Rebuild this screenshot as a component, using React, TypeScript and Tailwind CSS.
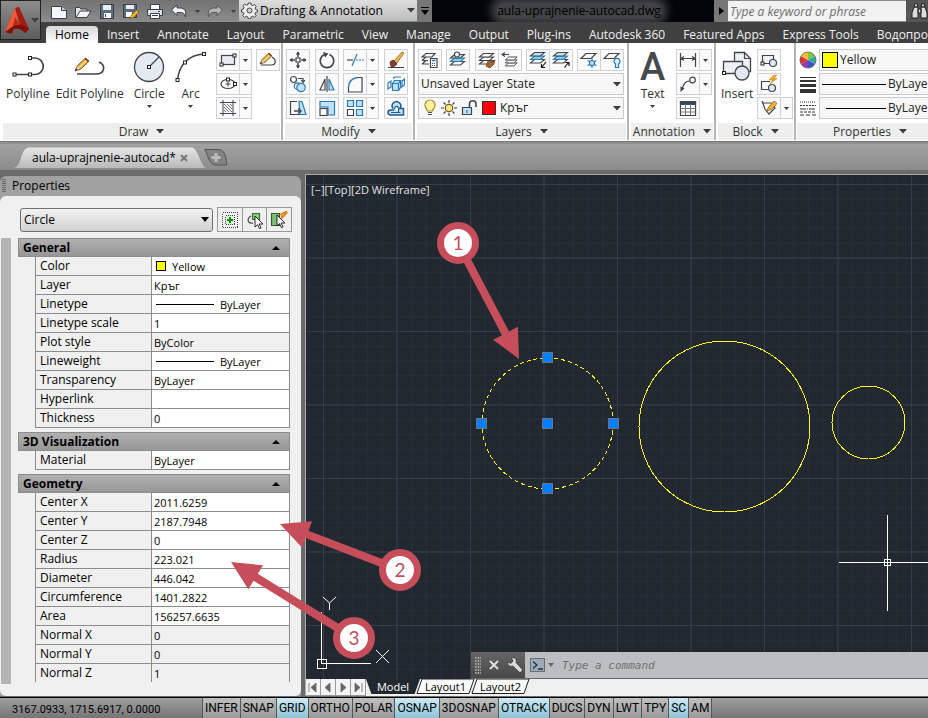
import type { ReactNode } from "react";

type IconProps = { w?: number; h?: number; children: ReactNode };

const INK = "#41464c";
const BLUE = "#2b7bb9";
const PALE = "#bfe2f7";

function Icon({ w = 18, h = 18, children }: IconProps) {
  return (
    <svg width={w} height={h} viewBox={`0 0 ${w} ${h}`} fill="none" stroke={INK} strokeWidth="1.2" aria-hidden="true" className="shrink-0">
      {children}
    </svg>
  );
}

function Caret({ big = false }: { big?: boolean }) {
  return big ? (
    <svg width="8" height="5" viewBox="0 0 8 5" aria-hidden="true" className="shrink-0"><path d="M0 0h8L4 4.6z" fill="#3c3c3c" /></svg>
  ) : (
    <svg width="5" height="3" viewBox="0 0 5 3" aria-hidden="true" className="shrink-0"><path d="M0 0h5L2.5 3z" fill="#3c3c3c" /></svg>
  );
}

function Node({ x, y }: { x: number; y: number }) {
  return <rect x={x - 1.5} y={y - 1.5} width="3" height="3" fill="#fff" stroke="#222" strokeWidth="1" />;
}

function Pencil() {
  return (
    <g stroke="none">
      <path d="M0 13L2.500 7.500 10.500 0l3.500 3.200L6 11z" fill="#e9a72d" />
      <path d="M4 8.500L11 2l1.200 1-7 6.600z" fill="#ffe28a" />
      <path d="M0 13l2.500-5.500L6 11z" fill="#e8d2b0" />
      <path d="M0 13l1-2.400 1.600 1.300z" fill="#222" />
      <path d="M9.400 1L11 0l3.200 3-1.200 1.300z" fill="#8c4a35" />
      <path d="M0 13L2.500 7.500 10.500 0l3.500 3.200L6 11z" fill="none" stroke="#5d431a" strokeWidth=".8" />
    </g>
  );
}

/* ---------- title bar ---------- */

function QuickIcon({ label, children }: { label: string; children: ReactNode }) {
  return (
    <button aria-label={label} className="flex h-[22px] w-6 items-center justify-center">
      <svg width="18" height="17" viewBox="0 0 18 17" fill="none" stroke="#3b4048" strokeWidth="1" aria-hidden="true">{children}</svg>
    </button>
  );
}

function QuickAccess() {
  return (
    <div className="flex shrink-0 items-center pl-[6px]">
      <QuickIcon label="New"><path d="M1.500 3.500h10l5 4v8h-15z" fill="#f4f7fb" /><path d="M11.500 3.500v4h5" fill="#c9d3e0" /></QuickIcon>
      <QuickIcon label="Open"><path d="M1.500 14V4.500h4l1.500 1.500h6v2" fill="#dfe5ec" /><path d="M2 14.500l4-6.500h11l-4 6.500z" fill="#f1f4f8" /></QuickIcon>
      <QuickIcon label="Save"><path d="M2.500 1.500h13v14h-13z" fill="#5b6b80" /><path d="M5 2h8v5H5z" fill="#e9eef5" stroke="none" /><path d="M6 10h7v5H6z" fill="#fff" stroke="none" /><path d="M7.500 11v3" /></QuickIcon>
      <QuickIcon label="Save As"><path d="M1.500 1.500h13v13h-13z" fill="#5b6b80" /><path d="M4 2h8v4H4z" fill="#e9eef5" stroke="none" /><path d="M4 9h6v5H4z" fill="#fff" stroke="none" /><path d="M8 16l1.500-4 5-5L17 9l-5.500 5.500z" fill="#f0b030" stroke="#7a5510" strokeWidth=".7" /></QuickIcon>
      <QuickIcon label="Plot"><path d="M4.500 6V1.500h9V6" fill="#fff" /><path d="M1.500 6.500h15v6h-15z" fill="#dde3ea" /><path d="M4.500 10.500h9v5h-9z" fill="#fff" /><path d="M6 12.500h6M12 8.500h2" /></QuickIcon>
      <QuickIcon label="Undo"><path d="M1.500 7L7 2v3h3.500c4 0 6 3 5 9-1-3.500-2.500-4.500-5-4.500H7v3z" fill="#eef3f8" /></QuickIcon>
      <button aria-label="Undo list" className="flex w-3 justify-center"><Caret /></button>
      <QuickIcon label="Redo"><path d="M16.500 7L11 2v3H7.500c-4 0-6 3-5 9 1-3.500 2.500-4.500 5-4.500H11v3z" fill="#b4b4b4" stroke="#555" /></QuickIcon>
      <button aria-label="Redo list" className="flex w-3 justify-center"><Caret /></button>
    </div>
  );
}

function TitleBar() {
  return (
    <div className="flex h-[22px] bg-gradient-to-b from-[#737373] to-[#8c8c8c]">
      <QuickAccess />
      <div className="relative flex w-[178px] shrink-0 items-center border-b border-[#888] bg-gradient-to-b from-[#dedede] to-[#bcbcbc] pl-[2px]">
        <svg width="17" height="17" viewBox="0 0 17 17" fill="none" stroke="#444" aria-hidden="true" className="shrink-0">
          <path d="M7.200 1h2.600l.4 2 1.500.6 1.700-1.100 1.900 1.900-1.200 1.700.6 1.500 1.800.4v1.900l-1.900.5-.6 1.500 1.100 1.700-1.800 1.900-1.700-1.200-1.500.6-.4 1.900H7.200l-.4-1.900-1.500-.6-1.700 1.100-1.900-1.800 1.200-1.800-.6-1.400L.5 10V7.500l1.800-.4.7-1.500-1.200-1.800 1.900-1.800 1.700 1.100L6.800 3z" fill="#ececec" />
          <circle cx="8.500" cy="8.500" r="2.500" fill="#cfcfcf" />
        </svg>
        <select aria-label="Workspace" className="w-full appearance-none truncate bg-transparent pl-[2px] text-xs text-black">
          <option>Drafting &amp; Annotation</option>
        </select>
        <span className="pointer-events-none absolute right-[2px]"><Caret big /></span>
      </div>
      <button aria-label="Customize toolbar" className="flex w-[15px] shrink-0 flex-col items-center justify-center gap-[2px] bg-[#777]">
        <span className="h-px w-2 bg-black" /><svg width="8" height="5" viewBox="0 0 8 5" aria-hidden="true"><path d="M0 0h8L4 5z" /></svg>
      </button>
      <div className="flex min-w-0 flex-1 items-center justify-center overflow-hidden bg-[#030507] pl-3">
        <span className="rounded-full bg-[#414243] text-xs whitespace-nowrap text-black shadow-[0_0_8px_6px_#414243]">aula-uprajnenie-autocad.dwg</span>
      </div>
      <button aria-label="Show search" className="flex w-[14px] shrink-0 items-center justify-center bg-[#777]">
        <svg width="5" height="8" viewBox="0 0 5 8" aria-hidden="true"><path d="M0 0l5 4-5 4z" /></svg>
      </button>
      <input aria-label="Search" placeholder="Type a keyword or phrase" className="h-[21px] w-[178px] shrink-0 border-t border-[#888] bg-[#f2f2f2] pl-[2px] text-xs italic placeholder:text-[#6d6d6d]" />
      <button aria-label="Find" className="flex w-[22px] shrink-0 items-center justify-end bg-[#555]">
        <svg width="17" height="18" viewBox="0 0 17 18" fill="#ddd" stroke="#222" aria-hidden="true">
          <path d="M3 5h4v11H1v-5zM10 5h4l2 6v5h-6zM7 7h3v4H7zM3.500 2h3v3h-3zM10.500 2h3v3h-3z" />
        </svg>
      </button>
    </div>
  );
}

const ribbonTabs = ["Home", "Insert", "Annotate", "Layout", "Parametric", "View", "Manage", "Output", "Plug-ins", "Autodesk 360", "Featured Apps", "Express Tools", "Водопровод"];

function Header() {
  return (
    <header className="flex bg-[#404040]">
      <button aria-label="Application menu" className="flex h-10 w-[41px] shrink-0 items-center gap-[2px] border border-[#222] bg-gradient-to-b from-[#8d8d8d] to-[#5d5d5d] pl-1">
        <svg width="24" height="27" viewBox="0 0 24 27" aria-hidden="true">
          <path d="M0 25L10 1l4-1-5 19z" fill="#d8331f" />
          <path d="M10 1l4-1 10 22-4 4-5-8z" fill="#a51c11" />
          <path d="M0 25l8-6c5-3 10-2 16 3l-4 4c-5-5-9-5-12-3l-1 4z" fill="#821009" />
          <path d="M10 1l3 12-5 6-8 6z" fill="#ef5a38" />
          <path d="M10 10l5 8H8z" fill="#c32716" />
        </svg>
        <Caret big />
      </button>
      <div className="flex min-w-0 flex-1 flex-col">
        <TitleBar />
        <nav className="flex h-[21px] items-end overflow-hidden pl-[5px]">
          {ribbonTabs.map((t, i) => (
            <button key={t} className={i === 0 ? "h-[17px] shrink-0 rounded-t-sm bg-gradient-to-b from-[#d8d8d8] to-white px-[9px] text-xs leading-[16px] text-black" : "h-[17px] shrink-0 px-[9px] text-xs leading-[16px] whitespace-nowrap text-[#f0f0f0]"}>
              {t}
            </button>
          ))}
        </nav>
      </div>
    </header>
  );
}

/* ---------- ribbon ---------- */

function Tool({ label, drop = false, children }: { label: string; drop?: boolean; children: ReactNode }) {
  return (
    <div className="flex shrink-0">
      <button aria-label={label} className="flex h-[22px] w-6 items-center justify-center border border-[#cfd1d4] bg-[#fafafa]"><Icon>{children}</Icon></button>
      {drop && <button aria-label={`${label} options`} className="flex h-[22px] w-3 items-center justify-center border border-l-0 border-[#cfd1d4] bg-[#fafafa]"><Caret /></button>}
    </div>
  );
}

function BigTool({ label, drop = false, children }: { label: string; drop?: boolean; children: ReactNode }) {
  return (
    <button className="flex h-[70px] shrink-0 flex-col items-center text-xs text-[#2c2f33]">
      <span className="flex h-[36px] items-center">{children}</span>
      <span className="leading-[18px] whitespace-nowrap">{label}</span>
      {drop && <span className="pt-[2px]"><Caret /></span>}
    </button>
  );
}

function Panel({ title, className, children }: { title: string; className: string; children: ReactNode }) {
  return (
    <section className={`flex flex-col border-r-2 border-[#b4b4b4] bg-white ${className}`}>
      <div className="h-20 pt-[6px]">{children}</div>
      <button className="mx-px flex h-[17px] items-center justify-center gap-2 bg-[#eeeeee] text-xs whitespace-nowrap text-[#333]">{title}<Caret big /></button>
    </section>
  );
}

function DrawPanel() {
  return (
    <Panel title="Draw" className="w-[283px] shrink-0 pl-[2px]">
      <div className="flex justify-between pr-px pl-1">
        <div className="flex gap-[6px]">
          <BigTool label="Polyline"><Icon w={32} h={26}><path d="M2.500 20.500h17M20 4h3a8 8 0 0 1 0 16.500h-3" strokeWidth="1.600" /><Node x={2.500} y={20.500} /><Node x={18} y={20.500} /><Node x={18} y={4} /></Icon></BigTool>
          <BigTool label="Edit Polyline"><Icon w={32} h={20}><path d="M3 17h19c9 0 10-9 3-12" strokeWidth="1.600" /><g transform="translate(1 1)"><Pencil /></g></Icon></BigTool>
        </div>
        <BigTool label="Circle" drop><Icon w={32} h={32}><circle cx="16" cy="16" r="14.500" fill="#e4eaf2" strokeWidth="1.300" /><path d="M16 16L26 6" /><Node x={16} y={16} /></Icon></BigTool>
        <BigTool label="Arc" drop><Icon w={32} h={32}><path d="M2.500 29C4 14 13 4 29 3" strokeWidth="1.600" /><Node x={2.500} y={29} /><Node x={10} y={11.500} /><Node x={29} y={3} /></Icon></BigTool>
        <div className="flex gap-1">
          <div className="flex flex-col gap-[2px]">
            <Tool label="Rectangle" drop><rect x="2.500" y="4.500" width="13" height="9" fill="#e8ecf2" /><Node x={2.500} y={13.500} /><Node x={15.500} y={4.500} /></Tool>
            <Tool label="Ellipse" drop><ellipse cx="9" cy="9" rx="7" ry="4.500" /><path d="M6.500 9h5M9 6.500v5" strokeWidth="1" /><Node x={9} y={4.500} /><Node x={16} y={9} /></Tool>
            <Tool label="Hatch" drop><path d="M4 1v16M14 1v16M1 3.500h16M1 14.500h16" strokeWidth="1" /><path d="M5 5l8 8M5 8l5 5M8 5l5 5M5 11l2 2M11 5l2 2" strokeWidth=".8" /></Tool>
          </div>
          <Tool label="Edit Spline"><path d="M2 14h10c6 0 5-6 1-8" /><g transform="translate(1 2) scale(.85)"><Pencil /></g></Tool>
        </div>
      </div>
    </Panel>
  );
}

function ModifyPanel() {
  return (
    <Panel title="Modify" className="w-[132px] shrink-0 pl-px">
      <div className="grid grid-cols-[24px_24px_36px_24px] justify-between gap-y-[2px] pr-[5px] pl-[2px]">
        <Tool label="Move"><path d="M9 1v5M9 12v5M1 9h5M12 9h5" strokeWidth="1.500" /><path d="M6.800 3.500L9 .5l2.200 3zM6.800 14.500L9 17.500l2.200-3zM3.500 6.800L.5 9l3 2.200zM14.500 6.800l3 2.200-3 2.200z" fill={INK} stroke="none" /><rect x="7" y="7" width="4" height="4" fill="#fff" /></Tool>
        <Tool label="Rotate"><path d="M6.500 3.500a6.800 6.800 0 1 0 5 0" strokeWidth="1.700" /><path d="M5 1l5.500 1.500-3.500 4z" fill={INK} stroke="none" /></Tool>
        <Tool label="Trim" drop><path d="M10 9h8" strokeDasharray="2 1" stroke={BLUE} /><path d="M1 9h6" /><path d="M11 3L6 15" stroke={BLUE} /></Tool>
        <Tool label="Erase"><path d="M1 16.500h16" strokeWidth="1" /><path d="M7 10L15 1l2 1-7 10z" fill="#edb640" stroke="#7c5723" strokeWidth=".7" /><path d="M3 11l3-2 4 4-3 2.500H4z" fill="#8b3d2e" stroke="#4d241c" strokeWidth=".8" /></Tool>
        <Tool label="Copy"><circle cx="4.500" cy="4.500" r="3" /><path d="M9 3.500h5v3M12.300 5l1.800 2.500L16 5" /><circle cx="8.500" cy="11" r="3.200" stroke={BLUE} /><circle cx="12" cy="12.500" r="4.200" stroke={BLUE} fill={PALE} /></Tool>
        <Tool label="Mirror"><path d="M7 4v11H2zM9 1v16" /><path d="M11 4v11h5z" fill={PALE} stroke={BLUE} /></Tool>
        <Tool label="Fillet" drop><path d="M2.500 12v5h13.500V2.500h-4" /><path d="M2.500 12C3 6 7 3 12 2.500" stroke={BLUE} strokeWidth="1.500" /></Tool>
        <Tool label="Explode"><path d="M5.500 8.500h6v7h-6zM5.500 8.500l2-3h6l-2 3M11.500 15.500l2-3v-7" fill={PALE} stroke={BLUE} /><path d="M1 8l3-2v6l-3 2zM17.500 4L15 6v6l2.500-2zM6 3.500l2-1.500h6" stroke={BLUE} /></Tool>
        <Tool label="Stretch"><path d="M8 2.500H1.500v13H12" /><path d="M10 2.500h3l4 13h-6z" fill={PALE} stroke={BLUE} /><path d="M5 12h6M9 9.500l3 2.500-3 2.500" strokeWidth="1.400" /></Tool>
        <Tool label="Scale"><path d="M2 2.500h14.500V16H10V8H2z" fill={PALE} stroke={BLUE} /><rect x="2" y="9.500" width="7" height="7" fill="#fff" /></Tool>
        <Tool label="Array" drop><g fill={PALE} stroke={BLUE}><path d="M1.500 1.500h6v6h-6zM10.500 1.500h6v6h-6zM10.500 10.500h6v6h-6z" /></g><path d="M1.500 10.500h6v6h-6z" fill="#fff" /></Tool>
        <Tool label="Offset"><path d="M6 9.500a4.300 4.300 0 1 1 7 0h3.500v6.500h-13a2.500 2.500 0 0 1 0-5h3.500" fill={PALE} stroke="#245a8d" strokeWidth="1.500" /><path d="M4 13.500h9.500M8 10.500a2 2 0 1 1 3.500-.5v3" fill="#fff" stroke="#245a8d" /></Tool>
      </div>
    </Panel>
  );
}

function Sheets({ blue = false }: { blue?: boolean }) {
  return (
    <g strokeWidth="1.100">
      <path d="M1.500 14l4-3.500h10l-4 3.500z" fill="#fff" />
      <path d="M1.500 10.500L5.500 7h10l-4 3.500z" fill={blue ? "#8ecbee" : "#fff"} stroke={blue ? BLUE : INK} />
      <path d="M1.500 7L5.500 3.500h10L11.500 7z" fill={blue ? PALE : "#fff"} />
    </g>
  );
}

function LayersPanel() {
  return (
    <Panel title="Layers" className="w-[214px] shrink-0 pl-px">
      <div className="flex flex-col gap-[2px] pr-[3px] pl-[2px]">
        <div className="flex justify-between">
          <Tool label="Layer Properties"><path d="M1 13l4-3.500M1 13h7M1 9.500L5 6h6M1 9.500h6M1 6l4-3.500h9L11 6z" /><path d="M9.500 7.500h6.500v9H9.500z" fill="#fff" /><path d="M11 9.500h3.500" stroke={BLUE} strokeWidth="1.600" /><path d="M11 12.500h4M11 14.500h4" strokeDasharray="1 1" /></Tool>
          <Tool label="Make Current"><Sheets blue /><circle cx="8" cy="3.500" r="2.500" fill="#fff" /></Tool>
          <div className="flex -space-x-px">
            <Tool label="Match Layer"><g transform="translate(0 -1)"><Sheets /></g><path d="M10 10l4 1 3-2-1 4-4 4-4-2z" fill="#a9642b" stroke="#693912" strokeWidth=".7" /></Tool>
            <Tool label="Layer Previous"><g transform="translate(3 3) scale(.85)"><Sheets /></g><path d="M8 3.500H2M4 1.500l-3 2 3 2" /></Tool>
          </div>
          <div className="flex -space-x-px">
            <Tool label="Isolate"><g transform="translate(0 -2)"><Sheets blue /></g><path d="M17 11l-4 5M12.500 13v3.500H16" stroke="#111" /></Tool>
            <Tool label="Unisolate"><g transform="translate(0 -2)"><Sheets blue /></g><path d="M12.500 16.500l4-5M13.500 11.500h3.500V15" stroke="#111" /></Tool>
          </div>
          <div className="flex -space-x-px">
            <Tool label="Freeze"><path d="M1 7.500l5-5h10l-5 5z" /><path d="M12 7v10M7.500 9.500l9 5M16.500 9.500l-9 5" stroke={BLUE} /><circle cx="12" cy="12" r="2.500" stroke={BLUE} fill={PALE} /></Tool>
            <Tool label="Layer Off"><path d="M1 7.500l5-5h10l-5 5z" /><path d="M12.500 13a3 3 0 1 1 3 0v3.500h-3z" stroke={BLUE} fill="#dff1fc" /></Tool>
          </div>
        </div>
        <div className="relative flex h-[22px] items-center border border-[#c6c9cd] bg-[#f7f7f7]">
          <select aria-label="Layer state" className="w-full appearance-none bg-transparent pl-[2px] text-xs text-[#222]"><option>Unsaved Layer State</option></select>
          <span className="pointer-events-none absolute right-[2px]"><Caret big /></span>
        </div>
        <div className="relative flex h-[22px] items-center gap-1 border border-[#c6c9cd] bg-[#f7f7f7] pl-1">
          <Icon w={14}><path d="M4.500 12C4 10 2 9 2 6a5 5 0 0 1 10 0c0 3-2 4-2.500 6z" fill="#fff3a6" stroke="#b08b24" /><path d="M5 13.500h4M5 15.500h4" stroke="#555" /></Icon>
          <Icon w={16}><circle cx="8" cy="9" r="3.700" fill="#ffe985" stroke="#6d6124" /><path d="M8 1v3M8 14v3M0 9h3M13 9h3M2.500 3.500l2 2M11.500 12.500l2 2M13.500 3.500l-2 2M4.500 12.500l-2 2" /></Icon>
          <Icon w={17}><path d="M1.500 8.500h9v7h-9z" fill={PALE} /><path d="M8.500 8V5a3 3 0 0 1 6.500 0v3" strokeWidth="1.600" /><path d="M6 11v3" stroke={BLUE} /></Icon>
          <span className="h-[14px] w-[14px] shrink-0 border border-[#333] bg-[#ff0000]" />
          <select aria-label="Current layer" className="w-full appearance-none bg-transparent text-xs text-[#222]"><option>Кръг</option></select>
          <span className="pointer-events-none absolute right-[2px]"><Caret big /></span>
        </div>
      </div>
    </Panel>
  );
}

function AnnotationPanel() {
  return (
    <Panel title="Annotation" className="w-[87px] shrink-0 pl-px">
      <div className="flex justify-between pr-[2px] pl-[10px]">
        <BigTool label="Text" drop><span className="font-['Roboto',sans-serif] text-[38px] leading-[36px] font-medium text-[#45494e]">A</span></BigTool>
        <div className="flex flex-col gap-[2px]">
          <Tool label="Dimension" drop><path d="M1.500 2v14M16.500 2v14M3 7.500h12M5 5.500l-3 2 3 2M13 5.500l3 2-3 2" /></Tool>
          <Tool label="Leader" drop><circle cx="13.500" cy="5" r="2.800" /><path d="M10.500 6C6 6 5 9 3 14" /><path d="M1.500 17V11.500l4 2z" fill={INK} stroke="none" /></Tool>
          <Tool label="Table"><path d="M1.500 2.500h15v14h-15z" fill="#fff" /><path d="M1.500 2.500h15v3h-15z" fill="#3c4a5c" /><path d="M1.500 9.500h15M1.500 13h15M6.500 5v11M11.500 5v11" strokeWidth="1" stroke="#6c7886" /></Tool>
        </div>
      </div>
    </Panel>
  );
}

function BlockPanel() {
  return (
    <Panel title="Block" className="w-[80px] shrink-0 pl-px">
      <div className="flex justify-between pr-px pl-1">
        <BigTool label="Insert"><Icon w={30} h={32}><path d="M12.500 1.500h10l6 6v13h-16z" fill="#eef2f7" strokeWidth="1.300" /><path d="M22.500 1.500v6h6" /><path d="M1.500 10.500h19v12h-19z" fill="#eef2f7" strokeWidth="1.300" /><circle cx="20" cy="22" r="7" fill="#e1e8f1" strokeWidth="1.300" /><Node x={2} y={22} /></Icon></BigTool>
        <div className="flex flex-col gap-[2px]">
          <Tool label="Create block"><path d="M2.500 4.500h11v8h-11z" fill="#eef1f5" /><circle cx="13" cy="12" r="3.500" fill="#e1e8f1" /><Node x={2.500} y={12.500} /></Tool>
          <Tool label="Edit block"><path d="M10 6.500H1.500v8H10" /><circle cx="12" cy="13" r="3.500" fill="#e1e8f1" /><path d="M14 0l-5 5h4l-3 4 7-5.500h-3.500L17 0z" fill="#f4b02c" stroke="#c17c12" strokeWidth=".6" /></Tool>
          <Tool label="Edit attributes" drop><path d="M2 2l3 8 4 5 6-6-4-5H2" /><path d="M7 12l1.500-4 5.500-6 3 2.500-5.500 6z" fill="#efb033" stroke="#7d5319" strokeWidth=".7" /></Tool>
        </div>
      </div>
    </Panel>
  );
}

function PropertiesRibbonPanel() {
  return (
    <Panel title="Properties" className="min-w-[150px] flex-1">
      <div className="flex flex-col gap-[2px] pl-[3px]">
        <div className="flex items-center gap-[2px]">
          <Icon><g stroke="none"><path d="M9 9V1a8 8 0 0 1 7 4z" fill="#7ac943" /><path d="M9 9l7-4a8 8 0 0 1 0 8z" fill="#36a9a2" /><path d="M9 9l7 4a8 8 0 0 1-7 4z" fill="#3857c4" /><path d="M9 9v8a8 8 0 0 1-7-4z" fill="#9a36b8" /><path d="M9 9l-7 4a8 8 0 0 1 0-8z" fill="#e0342b" /><path d="M9 9L2 5a8 8 0 0 1 7-4z" fill="#f3bd33" /></g><circle cx="9" cy="9" r="8" stroke="#666" strokeWidth=".8" /></Icon>
          <div className="flex h-[22px] flex-1 items-center gap-[2px] border border-[#c6c9cd] bg-[#f7f7f7] pl-[2px]">
            <span className="h-4 w-4 shrink-0 border border-black bg-[#ffff00]" />
            <select aria-label="Object color" className="w-full appearance-none bg-transparent text-xs text-[#222]"><option>Yellow</option></select>
          </div>
        </div>
        <div className="flex items-center gap-[2px]">
          <Icon><path d="M1 2.500h16" stroke="#333" strokeWidth="1" /><path d="M1 6h16" stroke="#333" strokeWidth="2" /><path d="M1 10.500h16" stroke="#333" strokeWidth="3" /><path d="M1 16h16" stroke="#333" strokeWidth="4" /></Icon>
          <div className="flex h-[22px] flex-1 items-center gap-[2px] border border-[#c6c9cd] bg-[#f7f7f7] pl-[2px]">
            <span className="h-px w-16 shrink-0 bg-black" />
            <select aria-label="Lineweight" className="w-full appearance-none bg-transparent text-xs text-[#222]"><option>ByLayer</option></select>
          </div>
        </div>
        <div className="flex items-center gap-[2px]">
          <Icon><g stroke="#333"><path d="M1 3h16" strokeDasharray="1 1" /><path d="M1 6.500h16" strokeDasharray="2 1" /><path d="M1 10h16" strokeDasharray="6 1 1 1" /><path d="M1 13h16" strokeDasharray="3 1" /><path d="M1 16h16" strokeDasharray="4 2" /></g></Icon>
          <div className="flex h-[22px] flex-1 items-center gap-[2px] border border-[#c6c9cd] bg-[#f7f7f7] pl-[6px]">
            <span className="h-px w-[60px] shrink-0 bg-black" />
            <select aria-label="Linetype" className="w-full appearance-none bg-transparent text-xs text-[#222]"><option>ByLayer</option></select>
          </div>
        </div>
      </div>
    </Panel>
  );
}

/* ---------- document tabs ---------- */

function FileTabs() {
  return (
    <div className="flex h-7 items-end border-t-2 border-[#8f8f8f] bg-gradient-to-b from-[#a2a2a2] to-[#8b8b8b] pb-[2px] pl-[14px]">
      <div className="relative flex h-[21px] w-[193px] items-center pl-[18px]">
        <svg className="absolute inset-0" width="193" height="21" viewBox="0 0 193 21" aria-hidden="true">
          <defs><linearGradient id="tab" x1="0" y1="0" x2="0" y2="1"><stop offset="0" stopColor="#e6e6e6" /><stop offset="1" stopColor="#b9b9b9" /></linearGradient></defs>
          <path d="M0 21C8 20 6 1 15 .5h162c8 0 9 20 16 20.500z" fill="url(#tab)" />
        </svg>
        <button className="relative text-xs text-black">aula-uprajnenie-autocad*</button>
        <button aria-label="Close drawing" className="relative ml-1"><svg width="8" height="8" viewBox="0 0 8 8" stroke="#777" strokeWidth="2" aria-hidden="true"><path d="M1 1l6 6M7 1L1 7" /></svg></button>
      </div>
      <button aria-label="New drawing" className="-ml-[3px]">
        <svg width="24" height="19" viewBox="0 0 24 19" aria-hidden="true"><path d="M1 .5h13c6 0 8 5 8.500 15.500H12C5 16 4 6 1 .5z" fill="#828282" stroke="#555" /><path d="M12 4v9M7.500 8.500h9" stroke="#bbb" strokeWidth="3" /></svg>
      </button>
    </div>
  );
}

/* ---------- properties palette ---------- */

type Row = { name: string; value: string; kind?: "swatch" | "line" | "locked" };

const general: Row[] = [
  { name: "Color", value: "Yellow", kind: "swatch" },
  { name: "Layer", value: "Кръг" },
  { name: "Linetype", value: "ByLayer", kind: "line" },
  { name: "Linetype scale", value: "1" },
  { name: "Plot style", value: "ByColor", kind: "locked" },
  { name: "Lineweight", value: "ByLayer", kind: "line" },
  { name: "Transparency", value: "ByLayer" },
  { name: "Hyperlink", value: "" },
  { name: "Thickness", value: "0" },
];
const visualization: Row[] = [{ name: "Material", value: "ByLayer" }];
const geometry: Row[] = [
  { name: "Center X", value: "2011.6259" },
  { name: "Center Y", value: "2187.7948" },
  { name: "Center Z", value: "0" },
  { name: "Radius", value: "223.021" },
  { name: "Diameter", value: "446.042" },
  { name: "Circumference", value: "1401.2822" },
  { name: "Area", value: "156257.6635" },
  { name: "Normal X", value: "0", kind: "locked" },
  { name: "Normal Y", value: "0", kind: "locked" },
  { name: "Normal Z", value: "1", kind: "locked" },
];

function PropertyGroup({ title, rows }: { title: string; rows: Row[] }) {
  return (
    <section className="mb-1">
      <button className="flex h-[19px] w-full items-center justify-between border border-[#8c8c8c] bg-gradient-to-b from-[#b0b0b0] to-[#979797] pr-[9px] pl-1 text-xs font-bold text-black">
        {title}
        <svg width="8" height="4" viewBox="0 0 8 4" aria-hidden="true"><path d="M0 4h8L4 0z" /></svg>
      </button>
      <table className="ml-[17px] w-[255px] table-fixed border-separate border-spacing-0 border-l border-[#8c8c8c] text-xs text-black">
        <tbody>
          {rows.map((r) => (
            <tr key={r.name} className="h-[19px]">
              <th scope="row" className="w-[116px] border-r border-b border-[#8c8c8c] p-0 pl-1 text-left leading-[18px] font-normal"><label htmlFor={`prop-${r.name}`}>{r.name}</label></th>
              <td className={r.kind === "locked" ? "border-r border-b border-[#8c8c8c] p-0" : "border-r border-b border-[#8c8c8c] bg-white p-0"}>
                <div className="flex h-[18px] items-center pl-[2px]">
                  {r.kind === "swatch" && <span className="mr-[6px] ml-[2px] h-[10px] w-[10px] shrink-0 border border-black bg-[#ffff00]" />}
                  {r.kind === "line" && <span className="mr-[6px] ml-[2px] h-px w-[58px] shrink-0 bg-black" />}
                  <input id={`prop-${r.name}`} defaultValue={r.value} readOnly={r.kind === "locked"} className="h-[18px] w-full min-w-0 bg-transparent text-[11px]" />
                </div>
              </td>
            </tr>
          ))}
        </tbody>
      </table>
    </section>
  );
}

function Palette() {
  return (
    <aside className="mt-[6px] flex w-[301px] shrink-0 flex-col rounded-t-md bg-[#a1a1a1]">
      <div className="flex h-5 items-center gap-[6px] pl-[2px] text-xs text-black">
        <svg width="4" height="14" viewBox="0 0 4 14" aria-hidden="true"><path d="M1 0v14M3 0v14" stroke="#333" strokeDasharray="1 1" /></svg>
        <h2>Properties</h2>
      </div>
      <div className="flex flex-1 flex-col rounded-md bg-[#f0f0f0] pt-[11px] pb-3">
        <div className="flex items-center gap-1 pl-5">
          <div className="relative flex h-6 w-[193px] items-center rounded-[3px] border border-[#707070] bg-gradient-to-b from-[#f2f2f2] to-[#d2d2d2]">
            <select aria-label="Selected object" className="w-full appearance-none bg-transparent pl-[3px] text-xs text-black"><option>Circle</option></select>
            <svg className="pointer-events-none absolute right-[3px]" width="8" height="5" viewBox="0 0 8 5" aria-hidden="true"><path d="M0 0h8L4 5z" /></svg>
          </div>
          <div className="flex h-[25px] divide-x divide-[#999] border border-[#999]">
            <button aria-label="Toggle PICKADD" className="flex w-[25px] items-center justify-center"><Icon><g strokeDasharray="1 1" strokeWidth="1" shapeRendering="crispEdges"><path d="M1.500 1.500h15v15h-15z" /><path d="M4.500 4.500h9v9h-9z" fill="#d9f5d3" /></g><path d="M9 6v6M6 9h6" stroke="#118a1a" strokeWidth="2" /></Icon></button>
            <button aria-label="Select objects" className="flex w-6 items-center justify-center"><Icon><path d="M6.500 2.500h7v6h-7z" fill="#8bd07c" stroke="#3c6b35" /><path d="M5 5C0 8 2 13 7 12" /><path d="M9 5v11l2.500-2.300 2 4 1.600-.8-2-3.900H17z" fill="#fff" stroke="#111" strokeWidth=".9" /></Icon></button>
            <button aria-label="Quick select" className="flex w-6 items-center justify-center"><Icon><path d="M1.500 2.500h8v12h-8z" fill="#7ebd73" stroke="#345f2d" /><path d="M12 7l5-5h-3l3-2-6 3z" fill="#f7b02c" stroke="#d47c13" /><path d="M7 4v11l2.500-2.300 2 4 1.600-.8-2-3.900H15z" fill="#fff" stroke="#111" strokeWidth=".9" /></Icon></button>
          </div>
        </div>
        <div className="mt-[6px] flex flex-1 pl-px">
          <div className="w-[10px] bg-[#b4b4b4]" />
          <div className="ml-[7px] h-[444px] w-[272px] overflow-hidden">
            <PropertyGroup title="General" rows={general} />
            <PropertyGroup title="3D Visualization" rows={visualization} />
            <PropertyGroup title="Geometry" rows={geometry} />
          </div>
        </div>
      </div>
    </aside>
  );
}

/* ---------- drawing area ---------- */

const grips = [[241, 182], [175, 248], [241, 248], [307, 248], [241, 313]];

function Drawing() {
  return (
    <div className="relative min-h-[503px] flex-1 overflow-hidden bg-[#212830]">
      <svg className="absolute inset-0 h-full w-full" aria-label="Model space" shapeRendering="crispEdges">
        <defs>
          <pattern id="minor" x="17" y="9" width="14.700" height="14.700" patternUnits="userSpaceOnUse"><path d="M.5 0v15M0 .5h15" stroke="#262e37" /></pattern>
          <pattern id="major" x="17" y="9" width="73.500" height="73.500" patternUnits="userSpaceOnUse"><path d="M.5 0v74M0 .5h74" stroke="#353e48" /></pattern>
        </defs>
        <rect width="100%" height="100%" fill="url(#minor)" />
        <rect width="100%" height="100%" fill="url(#major)" />
        <g fill="none" stroke="#ffff1e">
          <circle cx="241.500" cy="248.500" r="65.500" strokeDasharray="4 3" />
          <circle cx="418.500" cy="251.500" r="85.500" />
          <circle cx="562.500" cy="247.500" r="36.500" />
        </g>
        {grips.map(([x, y]) => <rect key={`${x}-${y}`} x={x - 4.5} y={y - 4.5} width="10" height="10" fill="#007fff" stroke="#6b7480" />)}
        <path d="M533 387.500h46M585 387.500h60M581.500 340v44M581.500 391v45" stroke="#fff" />
        <path d="M578.500 384.500h6v6h-6zM581.500 384v7M578 387.500h7" fill="none" stroke="#fff" />
      </svg>
      <span className="absolute top-[7px] left-[5px] text-[11px] whitespace-nowrap text-[#e4e4e4]">[−][Top][2D Wireframe]</span>
      <svg className="absolute bottom-[10px] left-[10px]" width="76" height="76" viewBox="0 0 76 76" fill="none" stroke="#fff" aria-hidden="true">
        <path d="M5.500 19v47M11 70.500h44M1.500 66.500h9v9h-9zM5.500 66v5M5 70.500h5" shapeRendering="crispEdges" />
        <path d="M7 4l6.500 6L20 4M13.500 10v7M60 57l13 13M73 57L60 70" />
      </svg>
      <div className="absolute right-0 bottom-0 left-[165px] flex h-[27px] items-center border-b border-[#666] bg-[#bcbec0]">
        <div className="flex h-full w-[54px] shrink-0 items-center gap-2 bg-gradient-to-b from-[#666] to-[#484848] pl-1">
          <svg width="6" height="17" viewBox="0 0 6 17" aria-hidden="true"><path d="M1 0v17M3.500 0v17M6 0v17" stroke="#aaa" strokeWidth="1.500" strokeDasharray="2 1" /></svg>
          <button aria-label="Close command line"><svg width="10" height="10" viewBox="0 0 10 10" stroke="#ddd" strokeWidth="2" aria-hidden="true"><path d="M1 1l8 8M9 1L1 9" /></svg></button>
          <button aria-label="Customize"><svg width="16" height="16" viewBox="0 0 16 16" aria-hidden="true"><path d="M1 5l3 1.500L6 4 4.500 1C8 0 10 2 9 5.500l6 6.500c1 2-1 4-3 3L6 9C3 10 0 8 1 5z" fill="#d8d8d8" stroke="#222" strokeWidth=".6" /></svg></button>
        </div>
        <svg className="ml-[5px] shrink-0" width="24" height="14" viewBox="0 0 24 14" aria-hidden="true"><rect x=".5" y=".5" width="14" height="13" fill="#9fa9b8" stroke="#636d7c" /><path d="M3 3.500L7 7l-4 3.500M8 11h5" stroke="#26303e" fill="none" strokeWidth="1.300" /><path d="M18 5h6l-3 4z" fill="#666" /></svg>
        <input aria-label="Command" placeholder="Type a command" className="ml-2 h-full min-w-0 flex-1 bg-transparent font-['DejaVu_Sans_Mono',monospace] text-[11px] italic placeholder:text-[#707274]" />
      </div>
    </div>
  );
}

const layoutArrows = [
  { label: "First layout", d: "M3 3v9M10 3v9L5 7.500z" },
  { label: "Previous layout", d: "M9 3v9L4 7.500z" },
  { label: "Next layout", d: "M5 3v9l5-4.500z" },
  { label: "Last layout", d: "M4 3v9l5-4.500zM11 3v9" },
];

function LayoutTabs() {
  return (
    <div className="flex h-[17px] bg-[#f0f0f0] text-[11px] text-black">
      <div className="flex">
        {layoutArrows.map(({ label, d }) => (
          <button key={label} aria-label={label} className="w-[15px] border border-t-0 border-l-0 border-[#999] bg-[#f4f4f4]">
            <svg width="14" height="15" viewBox="0 0 14 15" fill="#666" stroke="#666" strokeWidth=".8" aria-hidden="true"><path d={d} /></svg>
          </button>
        ))}
      </div>
      <div className="flex -space-x-1">
        <button className="h-[15px] w-[54px] bg-[#212830] text-center leading-[15px] text-white [clip-path:polygon(0_0,100%_0,90%_100%,10%_100%)]">Model</button>
        {["Layout1", "Layout2"].map((t) => (
          <button key={t} className="relative h-[15px] w-[59px] text-center leading-[15px]">
            <svg className="absolute inset-0" width="59" height="15" viewBox="0 0 59 15" aria-hidden="true"><path d="M1 14.500L6 0h52l-5 14.500z" fill="#fafafa" stroke="#222" /></svg>
            <span className="relative">{t}</span>
          </button>
        ))}
      </div>
    </div>
  );
}

const callouts = [
  { n: "1", cx: 458, cy: 73, tx: 519, ty: 189 },
  { n: "2", cx: 400, cy: 400, tx: 280, ty: 354 },
  { n: "3", cx: 354, cy: 468, tx: 231, ty: 392 },
];

function Callouts() {
  return (
    <svg className="pointer-events-none absolute top-0 left-0" width="560" height="520" viewBox="0 0 560 520" aria-hidden="true">
      {callouts.map(({ n, cx, cy, tx, ty }) => {
        const len = Math.hypot(tx - cx, ty - cy);
        const angle = (Math.atan2(ty - cy, tx - cx) * 180) / Math.PI;
        return (
          <g key={n}>
            <g transform={`translate(${cx} ${cy}) rotate(${angle})`} fill="#c64e5a">
              <path d={`M10 -4H${len - 29}V-14L${len} 0L${len - 29} 14V4H10z`} />
            </g>
            <circle cx={cx} cy={cy} r="17.500" fill="#fff" stroke="#c64e5a" strokeWidth="7" />
            <text x={cx} y={cy + 7} textAnchor="middle" fontSize="19" fill="#c0505c" className="font-['Lato',sans-serif]">{n}</text>
          </g>
        );
      })}
    </svg>
  );
}

/* ---------- status bar ---------- */

const modes: [string, boolean][] = [["INFER", false], ["SNAP", false], ["GRID", true], ["ORTHO", false], ["POLAR", false], ["OSNAP", true], ["3DOSNAP", false], ["OTRACK", true], ["DUCS", false], ["DYN", false], ["LWT", false], ["TPY", false], ["SC", true], ["AM", false]];

function StatusBar() {
  return (
    <footer className="flex h-[21px] overflow-hidden border-t border-black bg-gradient-to-b from-[#a0a0a0] to-[#757575] font-['Roboto',sans-serif] text-black">
      <output className="w-[202px] shrink-0 pt-[2px] pl-3 text-[11px] leading-5">3167.0933, 1715.6917, 0.0000</output>
      {modes.map(([m, on]) => (
        <button key={m} className={on ? "shrink-0 border-l border-[#555] bg-gradient-to-b from-[#cdeaf3] to-[#8cc4d6] px-[2px] text-xs" : "shrink-0 border-l border-[#555] bg-gradient-to-b from-[#c0c0c0] to-[#999] px-[2px] text-xs"}>{m}</button>
      ))}
      <span className="border-l border-[#555]" />
    </footer>
  );
}

export default function App() {
  return (
    <div className="flex min-h-screen flex-col overflow-hidden bg-[#6b6b6b] font-['Open_Sans','Noto_Sans',sans-serif]">
      <Header />
      <div className="flex overflow-hidden border-b border-[#777] bg-white pb-px">
        <DrawPanel />
        <ModifyPanel />
        <LayersPanel />
        <AnnotationPanel />
        <BlockPanel />
        <PropertiesRibbonPanel />
      </div>
      <FileTabs />
      <main className="relative flex flex-1 bg-[#6b6b6b] pb-px">
        <Palette />
        <div className="mt-[4px] ml-1 flex min-w-0 flex-1 flex-col border-t border-l border-[#aaa]">
          <Drawing />
          <LayoutTabs />
        </div>
        <Callouts />
      </main>
      <StatusBar />
    </div>
  );
}
